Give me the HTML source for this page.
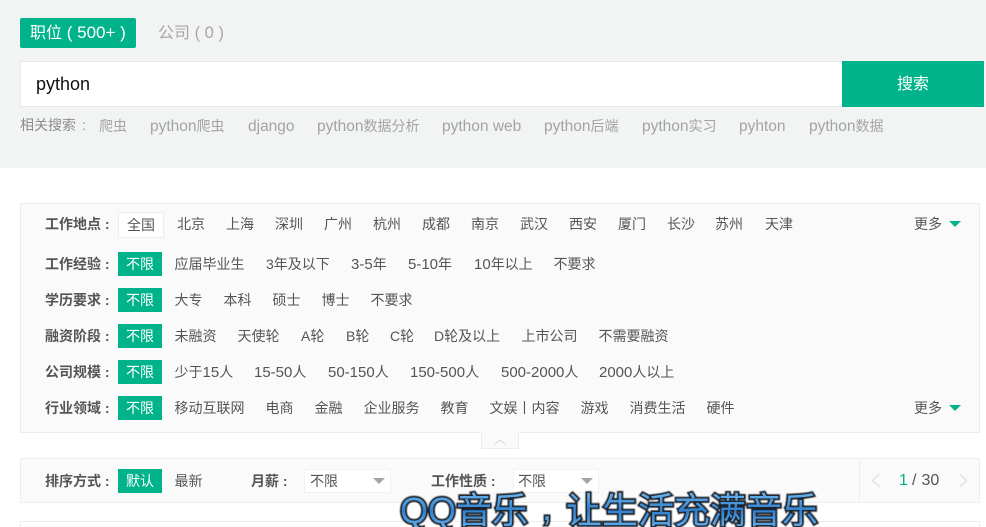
<!DOCTYPE html>
<html lang="zh">
<head>
<meta charset="utf-8">
<style>
html,body{margin:0;padding:0;background:#fff}
#p{position:relative;width:986px;height:527px;overflow:hidden;background:#fff;font-family:"Liberation Sans","Noto Sans CJK SC",sans-serif;font-size:14px;color:#555}
#p div,#p span{position:absolute;box-sizing:border-box}
#p span{white-space:nowrap;line-height:20px;height:20px}
u{text-decoration:none;font-size:15px}
.g u{font-size:15.500px}
.l{font-weight:bold;left:45px;color:#555}
.g{color:#a3a3a3}
.on{background:#00b38a;color:#fff;left:118px;width:44px;height:24px!important;line-height:24px!important;text-align:center}
.q{font-family:"Liberation Sans","Noto Sans CJK SC",sans-serif;font-size:36px}
.q1{fill:none;stroke:#1d222b;stroke-width:3.500px}
.q2{fill:url(#b)}
</style>
</head>
<body>
<div id="p">
<div style="left:0;top:0;width:986px;height:168px;background:#f2f4f4"></div>
<div style="left:20px;top:18px;width:116px;height:30px;background:#00b38a;border-radius:2px"></div>
<span style="left:30px;top:23px;font-size:16px;color:#fff">职位<b style="font-weight:normal;font-size:17px"> ( 500+ )</b></span>
<span style="left:158px;top:23px;font-size:16px;color:#a6a6a6">公司<b style="font-weight:normal;font-size:16.500px"> ( 0 )</b></span>
<div style="left:20px;top:61px;width:823px;height:46px;background:#fff;border:1px solid #e8e8e8"></div>
<span style="left:36px;top:74px;font-size:18px;color:#111">python</span>
<div style="left:842px;top:61px;width:142px;height:46px;background:#00b38a"></div>
<span style="left:897px;top:75px;font-size:16px;color:#fff">搜索</span>
<span style="left:20px;top:115px;color:#8c8c8c">相关搜索&nbsp;<b style="font-weight:normal;margin-left:2px">:</b></span>
<span class="g" style="left:99px;top:116px">爬虫</span>
<span class="g" style="left:150px;top:116px"><u>python</u>爬虫</span>
<span class="g" style="left:248px;top:116px"><u>django</u></span>
<span class="g" style="left:317px;top:116px"><u>python</u>数据分析</span>
<span class="g" style="left:442px;top:116px"><u>python web</u></span>
<span class="g" style="left:544px;top:116px"><u>python</u>后端</span>
<span class="g" style="left:642px;top:116px"><u>python</u>实习</span>
<span class="g" style="left:739px;top:116px"><u>pyhton</u></span>
<span class="g" style="left:809px;top:116px"><u>python</u>数据</span>

<div style="left:20px;top:203px;width:960px;height:230px;background:#fafafa;border:1px solid #ededed"></div>
<div style="left:481px;top:432px;width:38px;height:17px;background:#fafafa;border:1px solid #ededed;border-top:0"></div>
<svg style="position:absolute;left:494px;top:438px" width="12" height="7"><path d="M1 6L6 2L11 6" fill="none" stroke="#d8d8d8" stroke-width="1"/></svg>

<span class="l" style="top:214px">工作地点&nbsp;:</span>
<div style="left:118px;top:212px;width:46px;height:26px;background:#fff;border:1px solid #ededed"></div>
<span style="left:127px;top:215px">全国</span>
<span style="left:177px;top:214px">北京</span>
<span style="left:226px;top:214px">上海</span>
<span style="left:275px;top:214px">深圳</span>
<span style="left:324px;top:214px">广州</span>
<span style="left:373px;top:214px">杭州</span>
<span style="left:422px;top:214px">成都</span>
<span style="left:471px;top:214px">南京</span>
<span style="left:520px;top:214px">武汉</span>
<span style="left:569px;top:214px">西安</span>
<span style="left:618px;top:214px">厦门</span>
<span style="left:667px;top:214px">长沙</span>
<span style="left:715px;top:214px">苏州</span>
<span style="left:765px;top:214px">天津</span>
<span style="left:914px;top:214px">更多</span>
<svg style="position:absolute;left:949px;top:221px" width="13" height="7"><path d="M0 0H12L6 6Z" fill="#00b38a"/></svg>

<span class="l" style="top:254px">工作经验&nbsp;:</span>
<span class="on" style="top:252px">不限</span>
<span style="left:174.500px;top:254px">应届毕业生</span>
<span style="left:266px;top:254px">3年及以下</span>
<span style="left:351px;top:254px"><u>3-5</u>年</span>
<span style="left:408px;top:254px"><u>5-10</u>年</span>
<span style="left:474px;top:254px"><u>10</u>年以上</span>
<span style="left:553.500px;top:254px">不要求</span>

<span class="l" style="top:290px">学历要求&nbsp;:</span>
<span class="on" style="top:288px">不限</span>
<span style="left:174.500px;top:290px">大专</span>
<span style="left:223.500px;top:290px">本科</span>
<span style="left:272.500px;top:290px">硕士</span>
<span style="left:321.500px;top:290px">博士</span>
<span style="left:370.500px;top:290px">不要求</span>

<span class="l" style="top:326px">融资阶段&nbsp;:</span>
<span class="on" style="top:324px">不限</span>
<span style="left:174.500px;top:326px">未融资</span>
<span style="left:237.500px;top:326px">天使轮</span>
<span style="left:301px;top:326px">A轮</span>
<span style="left:346px;top:326px">B轮</span>
<span style="left:390px;top:326px">C轮</span>
<span style="left:434px;top:326px">D轮及以上</span>
<span style="left:521.500px;top:326px">上市公司</span>
<span style="left:598.500px;top:326px">不需要融资</span>

<span class="l" style="top:362px">公司规模&nbsp;:</span>
<span class="on" style="top:360px">不限</span>
<span style="left:174.500px;top:362px">少于<u>15</u>人</span>
<span style="left:254px;top:362px"><u>15-50</u>人</span>
<span style="left:328px;top:362px"><u>50-150</u>人</span>
<span style="left:410px;top:362px"><u>150-500</u>人</span>
<span style="left:501px;top:362px"><u>500-2000</u>人</span>
<span style="left:599px;top:362px"><u>2000</u>人以上</span>

<span class="l" style="top:398px">行业领域&nbsp;:</span>
<span class="on" style="top:396px">不限</span>
<span style="left:174.500px;top:398px">移动互联网</span>
<span style="left:265.500px;top:398px">电商</span>
<span style="left:314.500px;top:398px">金融</span>
<span style="left:363.500px;top:398px">企业服务</span>
<span style="left:440.500px;top:398px">教育</span>
<span style="left:489.500px;top:398px">文娱丨内容</span>
<span style="left:580.500px;top:398px">游戏</span>
<span style="left:629.500px;top:398px">消费生活</span>
<span style="left:706.500px;top:398px">硬件</span>
<span style="left:914px;top:398px">更多</span>
<svg style="position:absolute;left:949px;top:405px" width="13" height="7"><path d="M0 0H12L6 6Z" fill="#00b38a"/></svg>

<div style="left:20px;top:458px;width:960px;height:45px;background:#fafafa;border:1px solid #ededed"></div>
<div style="left:859px;top:458px;width:1px;height:45px;background:#ededed"></div>
<span class="l" style="top:471px">排序方式&nbsp;:</span>
<span class="on" style="top:469px">默认</span>
<span style="left:174.500px;top:471px">最新</span>
<span class="l" style="left:251px;top:471px">月薪&nbsp;:</span>
<div style="left:304px;top:469px;width:87px;height:24px;background:#fff;border:1px solid #f2f2f2"></div>
<span style="left:310px;top:471px">不限</span>
<svg style="position:absolute;left:373px;top:478px" width="13" height="7"><path d="M0 0H12L6 6Z" fill="#a6a6a6"/></svg>
<span class="l" style="left:431px;top:471px">工作性质&nbsp;:</span>
<div style="left:513px;top:469px;width:86px;height:24px;background:#fff;border:1px solid #f2f2f2"></div>
<span style="left:518px;top:471px">不限</span>
<svg style="position:absolute;left:581px;top:478px" width="13" height="7"><path d="M0 0H12L6 6Z" fill="#a6a6a6"/></svg>
<svg style="position:absolute;left:871px;top:473px" width="10" height="15"><path d="M8.500 1L1.500 7.500L8.500 14" fill="none" stroke="#d8d8d8" stroke-width="1"/></svg>
<span style="left:899px;top:471px;font-size:16px;color:#00b38a">1</span>
<span style="left:912px;top:471px;font-size:16px;color:#555">/</span>
<span style="left:921.500px;top:471px;font-size:16px;color:#555">30</span>
<svg style="position:absolute;left:958px;top:473px" width="10" height="15"><path d="M1.500 1L8.500 7.500L1.500 14" fill="none" stroke="#d8d8d8" stroke-width="1"/></svg>

<div style="left:20px;top:521px;width:960px;height:20px;background:#fff;border:1px solid #ededed"></div>

<svg style="position:absolute;left:390px;top:480px" width="440" height="47">
<defs>
<linearGradient id="b" x1="0" y1="0" x2="0" y2="1"><stop offset="0" stop-color="#72baf0"/><stop offset=".5" stop-color="#2f80cf"/><stop offset="1" stop-color="#6cb4ec"/></linearGradient>
<filter id="f" x="-5%" y="-20%" width="110%" height="140%"><feGaussianBlur stdDeviation="0.600"/></filter>
</defs>
<g filter="url(#f)">
<text class="q q1" x="10" y="43">QQ音乐</text>
<text class="q q1" x="152" y="40">,</text>
<text class="q q1" x="176" y="43">让生活充满音乐</text>
</g>
<text class="q q2" x="10" y="43">QQ音乐</text>
<text class="q q2" x="152" y="40">,</text>
<text class="q q2" x="176" y="43">让生活充满音乐</text>
</svg>
</div>
</body>
</html>
